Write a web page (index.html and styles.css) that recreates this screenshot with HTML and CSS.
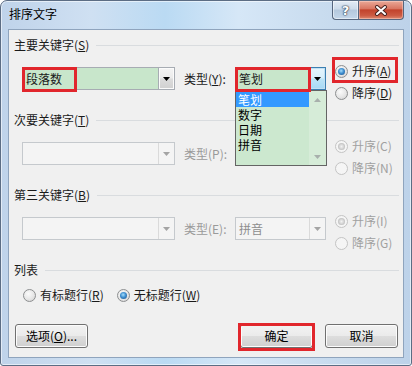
FILE: index.html
```html
<!DOCTYPE html>
<html lang="zh-CN">
<head>
<meta charset="utf-8">
<title>排序文字</title>
<link rel="stylesheet" href="styles.css">
</head>
<body>
<div class="window">
  <div class="titlebar">
    <span class="title">排序文字</span>
    <div class="caps">
      <span class="cap help">?</span>
      <span class="cap close">
        <svg width="14" height="11" viewBox="0 0 14 11"><path d="M3 2 L11 9 M11 2 L3 9" stroke="#4a2420" stroke-width="4" stroke-linecap="round"/><path d="M3 2 L11 9 M11 2 L3 9" stroke="#fff" stroke-width="2" stroke-linecap="round"/></svg>
      </span>
    </div>
  </div>

  <div class="client">
    <section class="group">
      <div class="group-head"><span>主要关键字(<u>S</u>)</span><i class="rule"></i></div>
      <div class="group-body">
        <div class="combo key green">
          <span class="field">段落数</span>
          <span class="dd"><svg width="7" height="4" viewBox="0 0 7 4"><path d="M0 0H7L3.5 4Z" fill="#000"/></svg></span>
          <span class="mark mark-key"></span>
        </div>
        <span class="type-label">类型(<u>Y</u>):</span>
        <div class="combo type green open">
          <span class="field">笔划</span>
          <span class="dd"><svg width="7" height="4" viewBox="0 0 7 4"><path d="M0 0H7L3.5 4Z" fill="#000"/></svg></span>
          <span class="mark mark-type"></span>
          <div class="list">
            <div class="item sel">笔划</div>
            <div class="item">数字</div>
            <div class="item">日期</div>
            <div class="item">拼音</div>
            <div class="sbar">
              <span class="sb-up"><svg width="7" height="4" viewBox="0 0 7 4"><path d="M0 4H7L3.5 0Z" fill="#a8b0ac"/></svg></span>
              <span class="sb-down"><svg width="7" height="4" viewBox="0 0 7 4"><path d="M0 0H7L3.5 4Z" fill="#a8b0ac"/></svg></span>
            </div>
          </div>
        </div>
        <div class="order">
          <span class="radio on"><i class="dot"></i>升序(<u>A</u>)<span class="mark mark-asc"></span></span>
          <span class="radio"><i class="dot"></i>降序(<u>D</u>)</span>
        </div>
      </div>
    </section>

    <section class="group">
      <div class="group-head"><span>次要关键字(<u>T</u>)</span><i class="rule"></i></div>
      <div class="group-body">
        <div class="combo key disabled">
          <span class="field"></span>
          <span class="dd"><svg width="7" height="4" viewBox="0 0 7 4"><path d="M0 0H7L3.5 4Z" fill="#a4a4a4"/></svg></span>
        </div>
        <span class="type-label off">类型(P):</span>
        <div class="combo type disabled">
          <span class="field"></span>
          <span class="dd"><svg width="7" height="4" viewBox="0 0 7 4"><path d="M0 0H7L3.5 4Z" fill="#a4a4a4"/></svg></span>
        </div>
        <div class="order">
          <span class="radio on off"><i class="dot"></i>升序(C)</span>
          <span class="radio off"><i class="dot"></i>降序(N)</span>
        </div>
      </div>
    </section>

    <section class="group">
      <div class="group-head"><span>第三关键字(<u>B</u>)</span><i class="rule"></i></div>
      <div class="group-body">
        <div class="combo key disabled">
          <span class="field"></span>
          <span class="dd"><svg width="7" height="4" viewBox="0 0 7 4"><path d="M0 0H7L3.5 4Z" fill="#a4a4a4"/></svg></span>
        </div>
        <span class="type-label off">类型(E):</span>
        <div class="combo type disabled">
          <span class="field">拼音</span>
          <span class="dd"><svg width="7" height="4" viewBox="0 0 7 4"><path d="M0 0H7L3.5 4Z" fill="#a4a4a4"/></svg></span>
        </div>
        <div class="order">
          <span class="radio on off"><i class="dot"></i>升序(I)</span>
          <span class="radio off"><i class="dot"></i>降序(G)</span>
        </div>
      </div>
    </section>

    <section class="group last">
      <div class="group-head"><span>列表</span><i class="rule"></i></div>
      <div class="list-row">
        <span class="radio"><i class="dot"></i>有标题行(<u>R</u>)</span>
        <span class="radio on"><i class="dot"></i>无标题行(<u>W</u>)</span>
      </div>
    </section>

    <div class="btn-row">
      <button class="pbtn">选项(<u>O</u>)...</button>
      <button class="pbtn ok">确定<span class="mark mark-ok"></span></button>
      <button class="pbtn">取消</button>
    </div>
  </div>
</div>
</body>
</html>
```

FILE: styles.css
```css
* { box-sizing: border-box; }
html, body { margin: 0; padding: 0; }
body {
  width: 412px;
  height: 366px;
  overflow: hidden;
  background: #ffffff;
  font-family: "Noto Sans CJK SC", "Microsoft YaHei", sans-serif;
  font-size: 12px;
  color: #1a1a1a;
}
u { text-decoration: underline; text-underline-offset: 1px; }

.window {
  width: 412px;
  height: 366px;
  border: 1px solid #5c6d84;
  border-radius: 7px 7px 3px 3px;
  background:
    linear-gradient(90deg, #bfd3ea 0%, #cfe0f2 22%, #badaf3 40%, #d6e7f7 58%, #c9dcef 78%, #bdd2e9 100%);
  box-shadow: inset 0 0 0 1px rgba(255, 255, 255, 0.55);
  display: flex;
  flex-direction: column;
  overflow: hidden;
}

.titlebar {
  height: 28px;
  flex: none;
  display: flex;
  align-items: flex-start;
  padding-left: 8px;
}
.title {
  margin-top: 5px;
  line-height: 16px;
  color: #000;
}
.caps {
  margin-left: auto;
  margin-right: 7px;
  display: flex;
}
.cap {
  height: 19px;
  border: 1px solid #56667e;
  border-top: none;
  display: flex;
  align-items: center;
  justify-content: center;
}
.help {
  width: 26px;
  border-right: none;
  border-radius: 0 0 0 4px;
  background: linear-gradient(#e2ebf5 0%, #cddbea 45%, #b4c8dd 50%, #c4d7ea 100%);
  box-shadow: inset 0 0 0 1px rgba(255, 255, 255, 0.5);
  color: #fff;
  font: bold 13px "DejaVu Sans", sans-serif;
  text-shadow: 0 0 1px #2e3d52, 0 0 1px #2e3d52, 0 0 2px #2e3d52;
}
.close {
  width: 46px;
  border-radius: 0 0 4px 0;
  background: linear-gradient(#eaa998 0%, #d97763 42%, #c2432c 50%, #cc5a42 80%, #dd8a70 100%);
  box-shadow: inset 0 0 0 1px rgba(255, 220, 210, 0.45);
}

.client {
  flex: 1;
  margin: 0 7px 7px;
  border: 1px solid #8fa4bd;
  background: #f0f0f0;
  padding-top: 7px;
  display: flex;
  flex-direction: column;
}

.group { margin-bottom: 11px; }
.group.last { margin-bottom: 0; }
.group-head {
  height: 16px;
  display: flex;
  align-items: center;
  padding: 0 4px 0 5px;
  line-height: 16px;
  color: #1a1a1a;
}
.rule {
  flex: 1;
  height: 0;
  border-top: 1px solid #d9dcdf;
  margin-left: 7px;
}
.group-body {
  margin-top: 10px;
  display: flex;
  align-items: flex-start;
  padding-left: 13px;
}

.combo {
  position: relative;
  height: 23px;
  margin-top: 4px;
  border: 1px solid #a7acb3;
  display: flex;
  background: #fff;
  flex: none;
}
.combo.key { width: 153px; }
.combo.type { width: 91px; }
.field {
  flex: 1;
  padding-left: 3px;
  line-height: 21px;
  white-space: nowrap;
}
.green .field { background: #c8e6cb; }
.dd {
  width: 16px;
  flex: none;
  border-left: 1px solid #a7acb3;
  background: linear-gradient(#f4f4f4 0%, #ebebeb 48%, #dcdcdc 52%, #d0d0d0 100%);
  box-shadow: inset 0 0 0 1px #fbfbfb;
  display: flex;
  align-items: center;
  justify-content: center;
}
.open .dd {
  border: 1px solid #3c7fb1;
  margin: -1px -1px -1px 0;
  width: 17px;
  background: linear-gradient(#e6f5fd 0%, #d8effb 48%, #bde4f7 52%, #a7d9f5 100%);
  box-shadow: inset 0 0 0 1px #c2e0f3;
}
.disabled { border-color: #c5c9cd; background: #f4f4f4; }
.disabled .field { color: #8d8d8d; }
.disabled .dd {
  border-left-color: #dadada;
  background: #f4f4f4;
  box-shadow: none;
}

.type-label {
  margin: 4px 0 0 9px;
  width: 51px;
  flex: none;
  line-height: 23px;
  white-space: nowrap;
}
.type-label.off { color: #9a9a9a; }

.order {
  margin-left: 9px;
  display: flex;
  flex-direction: column;
  gap: 6px;
}
.radio {
  position: relative;
  height: 16px;
  display: flex;
  align-items: center;
  white-space: nowrap;
  line-height: 16px;
}
.dot {
  position: relative;
  width: 13px;
  height: 13px;
  flex: none;
  margin-right: 4px;
  border-radius: 50%;
  border: 1px solid #8d8f90;
  background: radial-gradient(circle at 40% 35%, #fbfbfb 0%, #e6e6e6 55%, #cdcdcd 100%);
}
.radio.on .dot::after {
  content: "";
  position: absolute;
  left: 2px;
  top: 2px;
  width: 7px;
  height: 7px;
  border-radius: 50%;
  background: radial-gradient(circle at 45% 40%, #a6defc 0%, #3f8fd0 45%, #1a4e86 100%);
}
.radio.off { color: #a0a0a0; }
.radio.off .dot {
  border-color: #c4c4c4;
  background: #f5f5f5;
}
.radio.on.off .dot::after {
  background: radial-gradient(circle, #f2f2f2 0%, #d8d8d8 40%, #a9a9a9 100%);
}

.list {
  position: absolute;
  left: -1px;
  top: 22px;
  width: 92px;
  height: 76px;
  border: 1px solid #646464;
  background: #cce8cf;
  padding-top: 1px;
  z-index: 5;
  color: #000;
}
.item {
  line-height: 15px;
  height: 15px;
  padding-left: 2px;
  margin-right: 17px;
}
.item.sel { background: #3399ff; color: #fff; }
.sbar {
  position: absolute;
  right: 0;
  top: 0;
  bottom: 0;
  width: 17px;
  background: #d6ecd8;
  display: flex;
  flex-direction: column;
  justify-content: space-between;
}
.sb-up, .sb-down {
  height: 17px;
  display: flex;
  align-items: center;
  justify-content: center;
}

.list-row {
  margin-top: 9px;
  padding-left: 14px;
  display: flex;
  gap: 13px;
}

.btn-row {
  margin-top: 21px;
  padding: 0 5px 0 6px;
  display: flex;
}
.pbtn {
  position: relative;
  width: 73px;
  height: 24px;
  padding: 0;
  border: 1px solid #707070;
  border-radius: 3px;
  background: linear-gradient(#f2f2f2 0%, #ebebeb 48%, #dddddd 52%, #cfcfcf 100%);
  box-shadow: inset 0 0 0 1px #fcfcfc;
  font: inherit;
  color: #000;
  line-height: 20px;
  display: flex;
  align-items: center;
  justify-content: center;
}
.pbtn.ok { margin-left: auto; margin-right: 12px; }

.mark {
  position: absolute;
  border: 3px solid #e1262c;
  pointer-events: none;
  z-index: 6;
}
.mark-key { left: -1px; top: -1px; width: 55px; height: 25px; }
.mark-type { left: -1px; top: -1px; width: 76px; height: 25px; }
.mark-asc { left: -3px; top: -6px; width: 66px; height: 26px; }
.mark-ok { left: -3px; top: -2px; width: 77px; height: 28px; }
```
